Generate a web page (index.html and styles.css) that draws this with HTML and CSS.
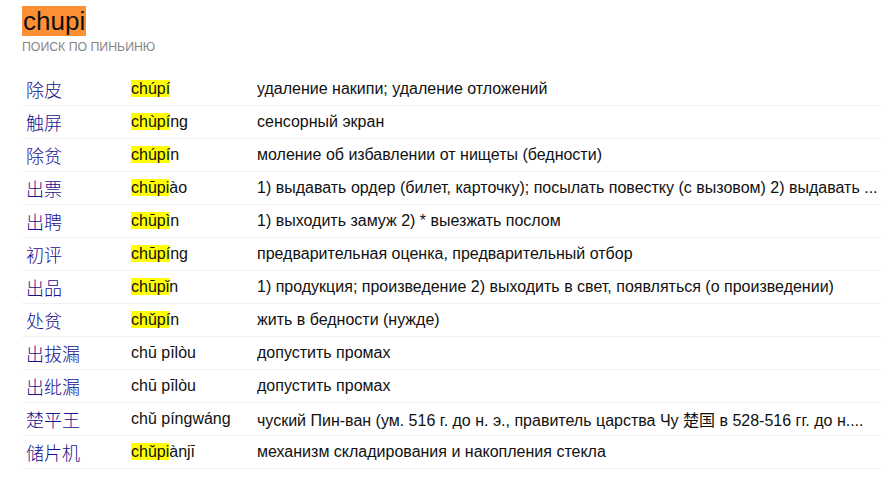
FILE: index.html
```html
<!DOCTYPE html>
<html lang="ru">
<head>
<meta charset="utf-8">
<link rel="stylesheet" href="styles.css">
</head>
<body>
<div class="page">
  <div class="head">
    <h1 class="query">chupi</h1>
    <div class="sub">поиск по пиньиню</div>
  </div>
  <div class="list">
    <div class="row"><span class="hz">除皮</span><span class="py"><mark>chúpí</mark></span><span class="tr">удаление накипи; удаление отложений</span></div>
    <div class="row"><span class="hz">触屏</span><span class="py"><mark>chùpí</mark>ng</span><span class="tr">сенсорный экран</span></div>
    <div class="row"><span class="hz">除贫</span><span class="py"><mark>chúpí</mark>n</span><span class="tr">моление об избавлении от нищеты (бедности)</span></div>
    <div class="row"><span class="hz">出票</span><span class="py"><mark>chūpi</mark>ào</span><span class="tr">1) выдавать ордер (билет, карточку); посылать повестку (с вызовом) 2) выдавать ...</span></div>
    <div class="row"><span class="hz">出聘</span><span class="py"><mark>chūpì</mark>n</span><span class="tr">1) выходить замуж 2) * выезжать послом</span></div>
    <div class="row"><span class="hz">初评</span><span class="py"><mark>chūpí</mark>ng</span><span class="tr">предварительная оценка, предварительный отбор</span></div>
    <div class="row"><span class="hz">出品</span><span class="py"><mark>chūpǐ</mark>n</span><span class="tr">1) продукция; произведение 2) выходить в свет, появляться (о произведении)</span></div>
    <div class="row"><span class="hz">处贫</span><span class="py"><mark>chǔpí</mark>n</span><span class="tr">жить в бедности (нужде)</span></div>
    <div class="row"><span class="hz">出拔漏</span><span class="py">chū pīlòu</span><span class="tr">допустить промах</span></div>
    <div class="row"><span class="hz">出纰漏</span><span class="py">chū pīlòu</span><span class="tr">допустить промах</span></div>
    <div class="row"><span class="hz">楚平王</span><span class="py">chǔ píngwáng</span><span class="tr">чуский Пин-ван (ум. 516 г. до н. э., правитель царства Чу 楚国 в 528-516 гг. до н....</span></div>
    <div class="row"><span class="hz">储片机</span><span class="py"><mark>chǔpi</mark>ànjī</span><span class="tr">механизм складирования и накопления стекла</span></div>
  </div>
</div>
</body>
</html>
```

FILE: styles.css
```css
html, body {
  margin: 0;
  padding: 0;
  background: #fff;
}
body {
  font-family: "Liberation Sans", Arial, "Noto Sans CJK SC", sans-serif;
  color: #111;
}
.page {
  padding: 6px 11px 0 22px;
}
.head {
  display: flex;
  flex-direction: column;
  align-items: flex-start;
}
.query {
  margin: 0;
  font-size: 26px;
  font-weight: normal;
  line-height: 30px;
  padding: 0 1px;
  background: #fd9035;
  color: #111;
}
.sub {
  margin-top: 4px;
  font-size: 12.3px;
  line-height: 14px;
  text-transform: uppercase;
  color: #858585;
}
.list {
  margin-top: 19px;
  display: flex;
  flex-direction: column;
}
.row {
  display: flex;
  align-items: center;
  height: 32px;
  border-bottom: 1px solid #f0f0f0;
  font-size: 16px;
}
.hz {
  width: 105px;
  padding-left: 4px;
  font-family: "Noto Sans CJK SC", sans-serif;
  font-size: 18px;
  font-weight: 300;
  color: #17108f;
  flex: none;
}
.py {
  width: 126px;
  flex: none;
  color: #111;
}
.tr {
  flex: 1;
  white-space: nowrap;
  overflow: hidden;
  color: #111;
}
mark {
  background: #ffff00;
  color: #111;
}
```
